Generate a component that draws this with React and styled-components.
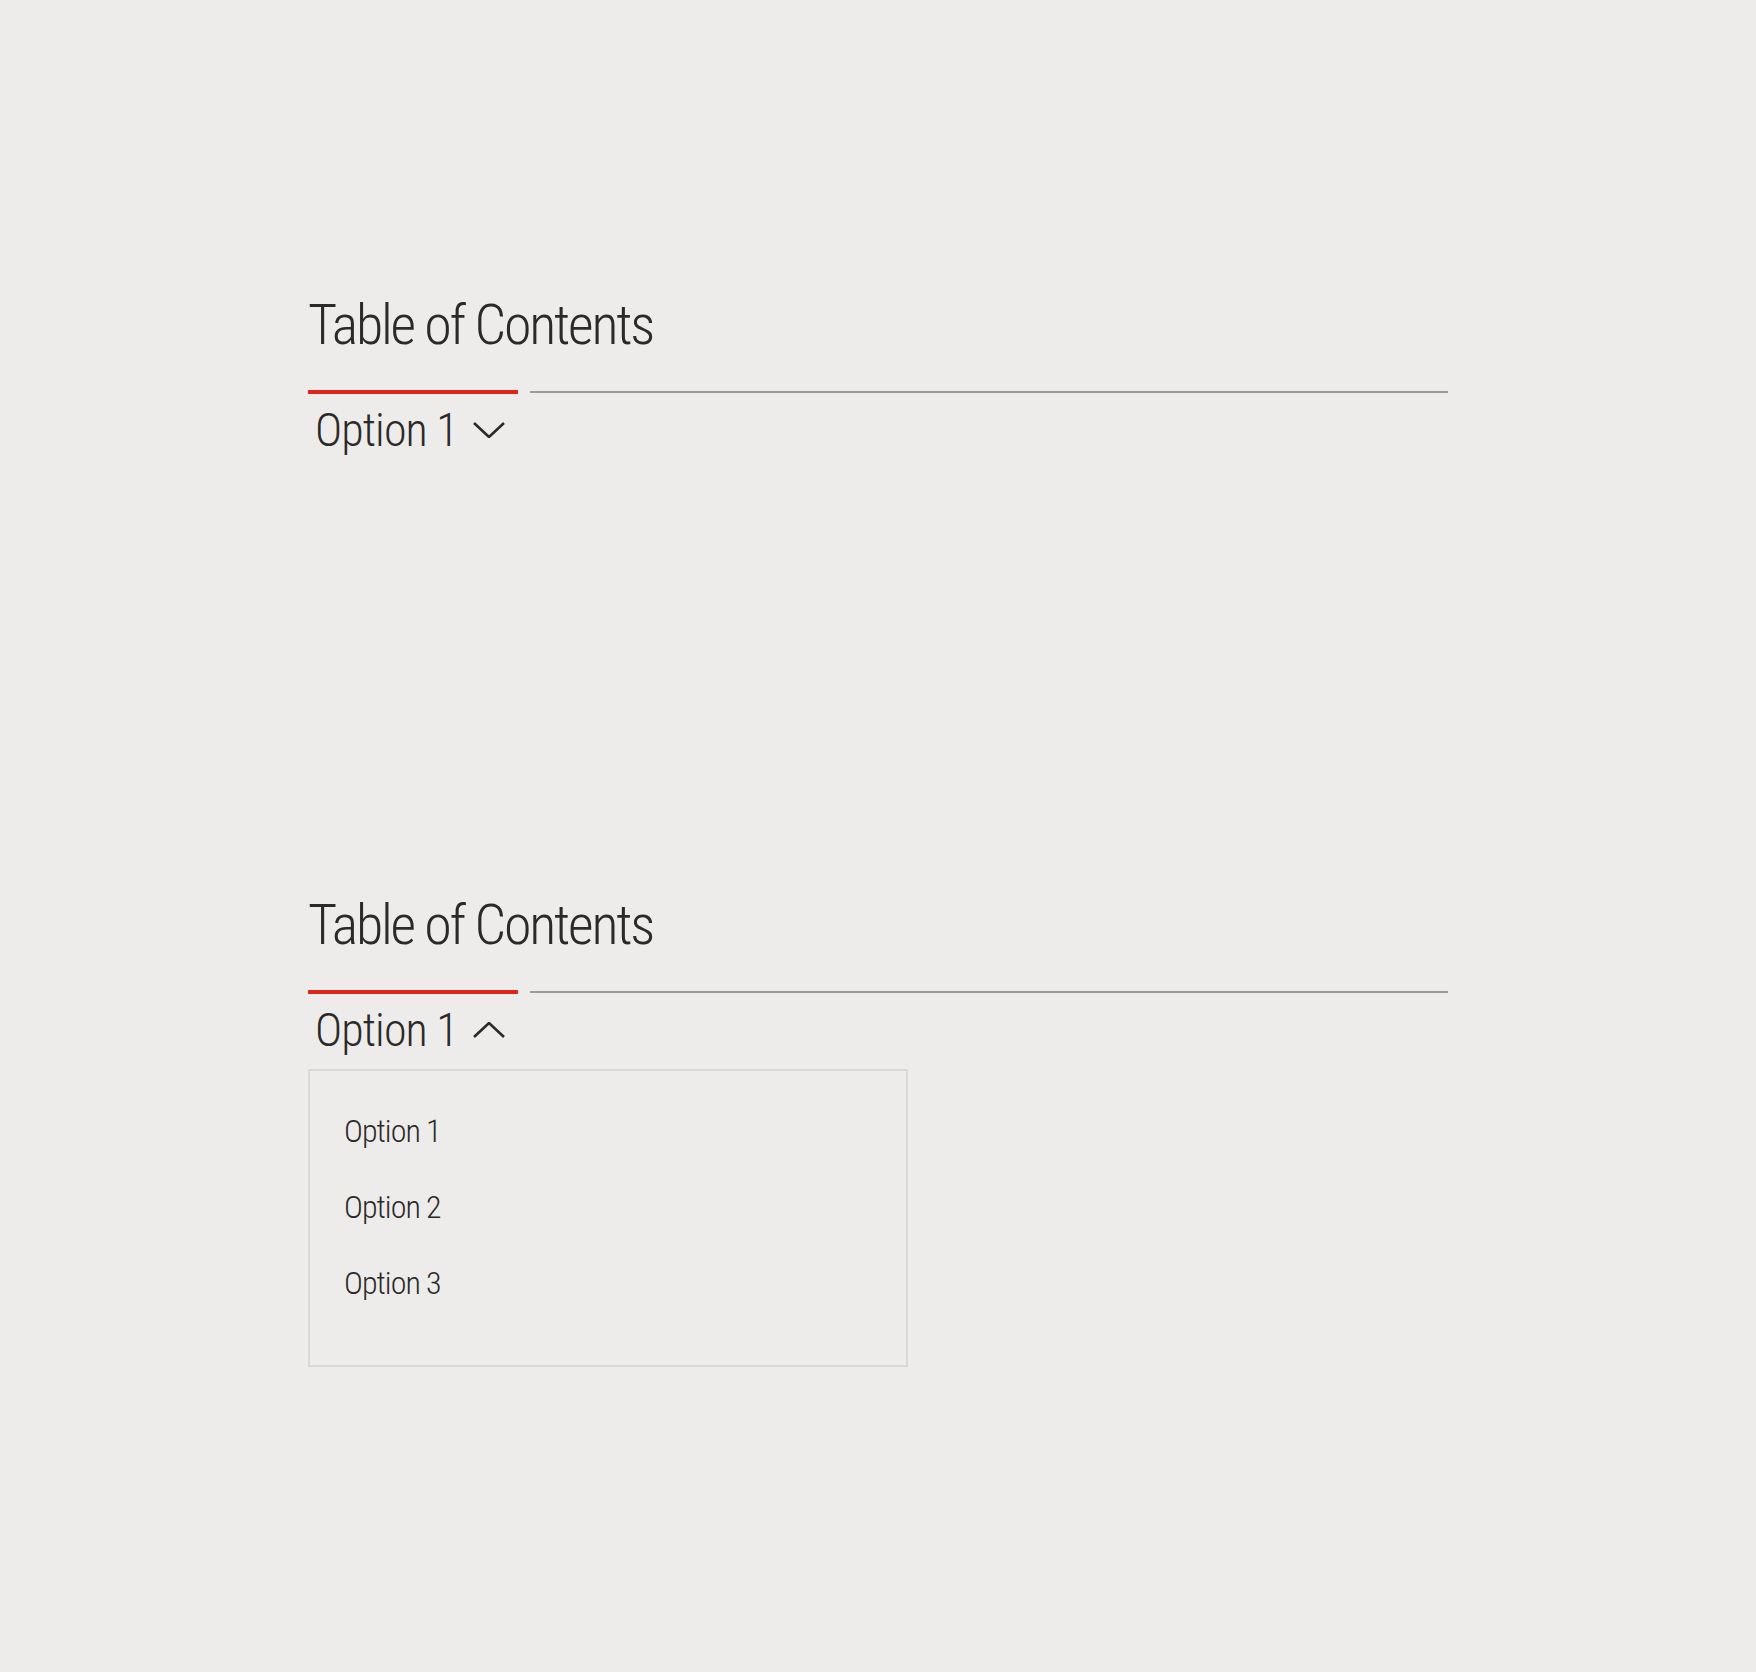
import React from "react";
import styled, { createGlobalStyle } from "styled-components";

const GlobalStyle = createGlobalStyle`
  body {
    margin: 0;
    background: #edecea;
    color: #2b2a29;
    font-family: "Roboto", "Liberation Sans", sans-serif;
    font-stretch: 75%;
  }
`;

const Page = styled.div`
  width: 1140px;
  margin: 0 auto;
  padding-top: 292px;
`;

const Demo = styled.section`
  min-height: 600px;
`;

const Heading = styled.h2`
  margin: 0;
  font-size: 56px;
  line-height: 66px;
  font-weight: 355;
  letter-spacing: -0.04em;
`;

const RuleRow = styled.div`
  display: flex;
  align-items: center;
  gap: 12px;
  height: 4px;
  margin-top: 32px;
`;

const ActiveRule = styled.div`
  width: 210px;
  height: 4px;
  background: #e2231a;
`;

const Rule = styled.div`
  flex: 1;
  height: 2px;
  background: #9a9a9a;
`;

const Toggle = styled.button`
  display: flex;
  align-items: center;
  gap: 15px;
  margin-top: 8px;
  padding: 0 0 0 7px;
  border: 0;
  background: none;
  color: inherit;
  font: inherit;
  font-stretch: 75%;
  font-size: 46px;
  line-height: 56px;
  font-weight: 355;
  letter-spacing: -0.02em;
  cursor: pointer;
`;

const Panel = styled.ul`
  list-style: none;
  box-sizing: border-box;
  width: 600px;
  margin: 11px 0 0;
  padding: 22px 34px 44px;
  border: 2px solid #d9d8d6;
`;

const Item = styled.li`
  padding: 18px 0;
  font-size: 32px;
  line-height: 40px;
  font-weight: 355;
  letter-spacing: -0.03em;
`;

const Chevron = ({ open }) => (
  <svg width="32" height="16" viewBox="0 0 32 16" fill="none">
    <polyline
      points={open ? "1,15 16,1 31,15" : "1,1 16,15 31,1"}
      stroke="#2b2a29"
      strokeWidth="2.6"
    />
  </svg>
);

const options = ["Option 1", "Option 2", "Option 3"];

const TableOfContents = ({ open }) => (
  <Demo>
    <Heading>Table of Contents</Heading>
    <RuleRow>
      <ActiveRule />
      <Rule />
    </RuleRow>
    <Toggle>
      Option 1
      <Chevron open={open} />
    </Toggle>
    {open && (
      <Panel>
        {options.map(o => (
          <Item key={o}>{o}</Item>
        ))}
      </Panel>
    )}
  </Demo>
);

export default function App() {
  return (
    <>
      <GlobalStyle />
      <Page>
        <TableOfContents />
        <TableOfContents open />
      </Page>
    </>
  );
}
